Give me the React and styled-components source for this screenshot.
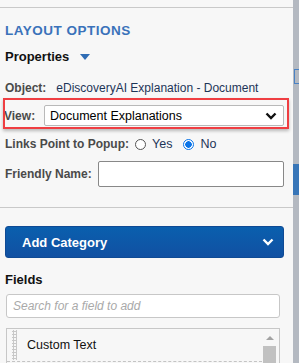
import React from "react";
import styled, { createGlobalStyle } from "styled-components";

const GlobalStyle = createGlobalStyle`
  html, body {
    margin: 0;
    padding: 0;
    background: #f7f7f7;
    font-family: "Liberation Sans", Arial, sans-serif;
  }
`;

const Page = styled.div`
  display: flex;
  width: 299px;
  height: 363px;
  overflow: hidden;
`;

const Panel = styled.div`
  width: 293px;
  flex-shrink: 0;
  background: #f7f7f7;
  padding-top: 7px;
  box-sizing: border-box;
`;

const Section = styled.div`
  border-top: 1px solid #c9c9c9;
  padding: 0 9px 0 5px;
`;

const Title = styled.h2`
  margin: 15px 0 0;
  font-size: 13.5px;
  font-weight: bold;
  color: #3a72ba;
  letter-spacing: 0.5px;
`;

const SubTitle = styled.div`
  display: flex;
  align-items: center;
  margin-top: 11px;
  font-size: 13px;
  font-weight: bold;
  color: #111;
`;

const Caret = styled.span`
  width: 0;
  height: 0;
  margin-left: 11px;
  border-left: 5px solid transparent;
  border-right: 5px solid transparent;
  border-top: 6px solid #2f6db5;
`;

const Row = styled.div`
  display: flex;
  align-items: center;
  margin-top: ${(p) => p.$mt || 0}px;
  font-size: 12px;
  color: #444;
`;

const Label = styled.span`
  font-weight: bold;
  color: #4a4a4a;
  margin-right: ${(p) => p.$mr || 6}px;
  white-space: nowrap;
`;

const Value = styled.span`
  color: #1d3557;
  white-space: nowrap;
`;

const Highlight = styled.div`
  display: flex;
  align-items: center;
  margin: 3px -5px 0 -2px;
  padding: 5px 3px 1px 0;
  border: 2px solid #ef3e42;
  box-shadow: 0 2px 3px rgba(0, 0, 0, 0.25);
  font-size: 12px;
  overflow: hidden;
`;

const ViewLabel = styled.span`
  font-weight: bold;
  color: #4a4a4a;
  width: 40px;
  margin-left: -1px;
  flex-shrink: 0;
  white-space: nowrap;
`;

const SelectBox = styled.div`
  flex: 1;
  display: flex;
  align-items: center;
  justify-content: space-between;
  height: 21px;
  box-sizing: border-box;
  padding: 0 6px 0 5px;
  background: #fff;
  border: 1px solid #b9b9b9;
  border-radius: 2px;
  color: #000;
  font-size: 12.5px;
`;

const SelectArrow = styled.span`
  display: flex;
  color: #111;
`;

const RadioCircle = styled.span`
  width: 11px;
  height: 11px;
  border-radius: 50%;
  box-sizing: border-box;
  border: ${(p) => (p.$checked ? "1px solid #0a74e8" : "1px solid #555")};
  background: ${(p) => (p.$checked ? "radial-gradient(circle, #0a74e8 3px, #fff 3.5px)" : "#fff")};
  margin: 0 6px 0 ${(p) => p.$ml || 0}px;
`;

const RadioText = styled.span`
  color: #1d3557;
  font-size: 12.5px;
`;

const TextInput = styled.div`
  flex: 1;
  height: 24px;
  background: #fff;
  border: 1px solid #888;
  border-radius: 2px;
`;

const Divider = styled.div`
  height: 1px;
  background: #c9c9c9;
  margin-top: 20px;
`;

const BlueButton = styled.div`
  display: flex;
  align-items: center;
  justify-content: space-between;
  height: 32px;
  margin: 18px 0 0 5px;
  width: 279px;
  box-sizing: border-box;
  padding: 0 9px 0 16px;
  background: linear-gradient(#0a5fae, #1150a2);
  border: 1px solid #0f4a94;
  border-radius: 3px;
  color: #fff;
  font-size: 13px;
  font-weight: bold;
`;

const FieldsTitle = styled.div`
  margin: 14px 0 0 5px;
  font-size: 13px;
  font-weight: bold;
  color: #111;
`;

const Search = styled.div`
  margin: 7px 0 0 6px;
  width: 274px;
  height: 24px;
  box-sizing: border-box;
  background: #fff;
  border: 1px solid #c7c7c7;
  border-radius: 3px;
  padding-left: 6px;
  display: flex;
  align-items: center;
  font-size: 12px;
  font-style: italic;
  color: #a9a9a9;
`;

const List = styled.div`
  margin: 10px 0 0 6px;
  width: 274px;
  height: 40px;
  box-sizing: border-box;
  border: 1px solid #c7c7c7;
  border-bottom: none;
  background: #f7f7f7;
  display: flex;
`;

const ListItems = styled.div`
  flex: 1;
`;

const ListItem = styled.div`
  display: flex;
  align-items: center;
  height: 32px;
  border-bottom: 1px dashed #c4c4c4;
  font-size: 12.5px;
  color: #111;
`;

const Handle = styled.span`
  width: 5px;
  height: 30px;
  margin: 0 10px 0 5px;
  background-image: radial-gradient(circle, #c8c8c8 1px, transparent 1.2px);
  background-size: 3px 3px;
`;

const Scrollbar = styled.div`
  width: 15px;
  margin-right: 2px;
  display: flex;
  flex-direction: column;
  align-items: center;
`;

const ScrollUp = styled.span`
  margin-top: 7px;
  width: 0;
  height: 0;
  border-left: 4px solid transparent;
  border-right: 4px solid transparent;
  border-bottom: 4px solid #a3a3a3;
`;

const Thumb = styled.div`
  margin-top: 6px;
  width: 13px;
  flex: 1;
  background: #c1c1c1;
`;

const Strip = styled.div`
  flex: 1;
  background: #b4b9c1;
  display: flex;
  flex-direction: column;
`;

const StripBox = styled.div`
  margin-top: 69px;
  height: 13px;
  border: 1px solid #4a82c4;
  border-right: none;
  margin-left: 1px;
`;

const StripBlock = styled.div`
  margin-top: 80px;
  height: 31px;
  background: #3876b8;
`;

function Chevron() {
  return (
    <svg width="12" height="8" viewBox="0 0 12 8">
      <path d="M1.5 1.5 L6 6 L10.5 1.5" fill="none" stroke="currentColor" strokeWidth="2.4" />
    </svg>
  );
}

export default function App() {
  return (
    <>
      <GlobalStyle />
      <Page>
        <Panel>
          <Section>
            <Title>LAYOUT OPTIONS</Title>
            <SubTitle>
              Properties
              <Caret />
            </SubTitle>
            <Row $mt={17}>
              <Label $mr={10}>Object:</Label>
              <Value>eDiscoveryAI Explanation - Document</Value>
            </Row>
            <Highlight>
              <ViewLabel>View:</ViewLabel>
              <SelectBox>
                Document Explanations
                <SelectArrow>
                  <Chevron />
                </SelectArrow>
              </SelectBox>
            </Highlight>
            <Row $mt={8}>
              <Label $mr={4}>Links Point to Popup:</Label>
              <RadioCircle $ml={2} />
              <RadioText>Yes</RadioText>
              <RadioCircle $checked $ml={11} />
              <RadioText>No</RadioText>
            </Row>
            <Row $mt={10}>
              <Label $mr={6}>Friendly Name:</Label>
              <TextInput />
            </Row>
          </Section>
          <Divider />
          <BlueButton>
            Add Category
            <Chevron />
          </BlueButton>
          <FieldsTitle>Fields</FieldsTitle>
          <Search>Search for a field to add</Search>
          <List>
            <ListItems>
              <ListItem>
                <Handle />
                Custom Text
              </ListItem>
            </ListItems>
            <Scrollbar>
              <ScrollUp />
              <Thumb />
            </Scrollbar>
          </List>
        </Panel>
        <Strip>
          <StripBox />
          <StripBlock />
        </Strip>
      </Page>
    </>
  );
}
